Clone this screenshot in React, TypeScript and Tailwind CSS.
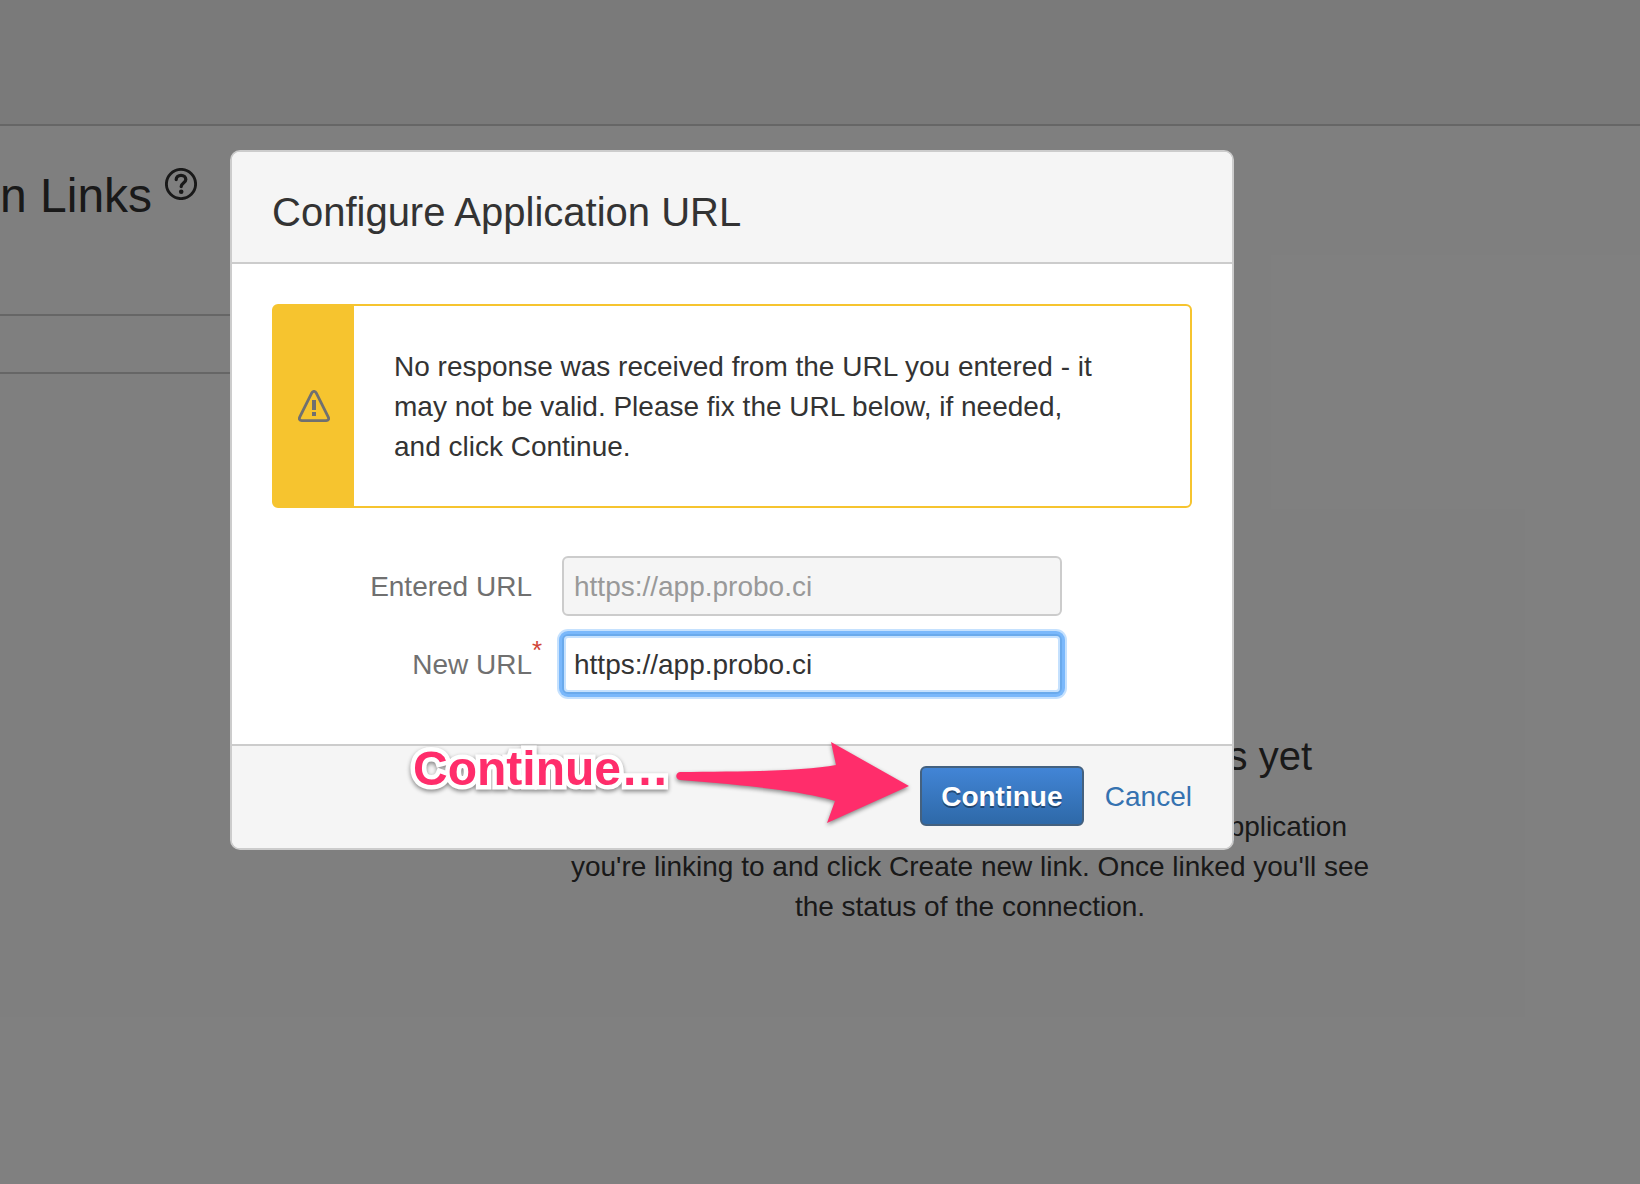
const INPUT =
  "h-[60px] w-full max-w-[500px] rounded-[6px] border-2 px-[10px] pt-[2px] text-[28px] outline-none";

const LABEL = "relative w-[260px] shrink-0 pt-[2px] text-right text-[28px] text-[#707070]";

function HelpIcon() {
  return (
    <svg viewBox="0 0 32 32" className="size-8" fill="none" stroke="currentColor" aria-hidden="true">
      <circle cx="16" cy="16" r="14.6" strokeWidth="2.9" />
      <path
        d="M11.2 11.6c0-2.700 2-4.300 4.800-4.300s4.800 1.700 4.800 4.100c0 3.700-4.600 3.600-4.600 7.200"
        strokeWidth="3.300"
        strokeLinecap="round"
      />
      <circle cx="16.2" cy="23.8" r="2.3" fill="currentColor" stroke="none" />
    </svg>
  );
}

function WarningIcon() {
  return (
    <svg viewBox="0 0 32 32" className="size-8 text-[#707070]" aria-hidden="true">
      <path
        d="M13.8 2.8c1-1.9 3.4-1.9 4.4 0l12.100 24.300c.9 1.8 0 3.500-2 3.500h-24.600c-2 0-2.9-1.700-2-3.500z"
        fill="none"
        stroke="currentColor"
        strokeWidth="2.800"
        strokeLinejoin="round"
      />
      <path d="M14 10h4v10h-4zM14 22h4v4h-4z" fill="currentColor" />
    </svg>
  );
}

function Arrow() {
  return (
    <svg
      viewBox="0 0 236 84"
      className="absolute -top-1 left-[444px] h-[84px] w-[236px] overflow-visible drop-shadow-[0_2px_2px_rgba(0,0,0,0.45)]"
      aria-hidden="true"
    >
      <path
        d="M4 30C60 30 128 29 160 23L155 0L233 44L151 81L159 59C132 50 70 43 4 38C-1 37-1 31 4 30Z"
        fill="#ff2d6b"
      />
    </svg>
  );
}

function Page() {
  return (
    <div className="min-h-screen bg-white">
      <header className="h-[126px] border-b-2 border-[#ccc] bg-[#f5f5f5]" />
      <main>
        <div className="flex h-[188px] items-start pt-[42px]">
          <h1 className="pt-1 text-[48px] leading-[48px]">n Links</h1>
          <a href="#help" aria-label="Help" className="ml-[13px]">
            <HelpIcon />
          </a>
        </div>
        <div className="h-[60px] w-3/5 border-y-2 border-[#ccc]" />
        <section className="ml-[570px] flex w-[800px] flex-col pt-[362px]">
          <h2 className="self-end pr-[58px] text-[40px] leading-[40px]">s yet</h2>
          <p className="pt-[31px] text-center text-[28px] leading-[40px]">
            <span className="block pr-[23px] text-right">pplication</span>
            you're linking to and click Create new link. Once linked you'll see the status of the
            connection.
          </p>
        </section>
      </main>
    </div>
  );
}

function Dialog() {
  return (
    <section
      role="dialog"
      aria-labelledby="dialog-title"
      className="w-full max-w-[1004px] rounded-[10px] border-2 border-[#ccc] bg-white"
    >
      <header className="rounded-t-[8px] border-b-2 border-[#ccc] bg-[#f5f5f5] px-10 pt-10 pb-[30px]">
        <h2 id="dialog-title" className="text-[40px] leading-[40px]">
          Configure Application URL
        </h2>
      </header>

      <div className="px-10 pt-10 pb-[50px]">
        <div role="alert" className="flex rounded-[6px] border-2 border-[#f6c42f] bg-white">
          <div className="flex w-20 shrink-0 items-center justify-center bg-[#f6c42f]">
            <WarningIcon />
          </div>
          <p className="pt-[41px] pr-[90px] pb-[39px] pl-10 text-[28px] leading-[40px]">
            No response was received from the URL you entered - it may not be valid. Please fix the
            URL below, if needed, and click Continue.
          </p>
        </div>

        <form className="flex flex-col gap-[18px] pt-12">
          <div className="flex items-center gap-[30px]">
            <label htmlFor="entered" className={LABEL}>
              Entered URL
            </label>
            <input
              id="entered"
              type="text"
              disabled
              defaultValue="https://app.probo.ci"
              className={INPUT + " border-[#ccc] bg-[#f5f5f5] text-[#999]"}
            />
          </div>
          <div className="flex items-center gap-[30px]">
            <label htmlFor="new" className={LABEL}>
              New URL
              <span className="absolute -top-2 left-full text-[26px] leading-[32px] text-[#d04437]">
                *
              </span>
            </label>
            <input
              id="new"
              type="text"
              required
              defaultValue="https://app.probo.ci"
              className={
                INPUT +
                " border-[#6aaaec] bg-white shadow-[0_0_0_3px_#7ab8fb,0_0_0_5px_#c5e1fe,inset_0_0_0_2px_#c5e1fe]"
              }
            />
          </div>
        </form>
      </div>

      <footer className="relative flex items-center justify-end gap-[21px] rounded-b-[8px] border-t-2 border-[#ccc] bg-[#f5f5f5] px-10 pt-5 pb-[22px]">
        <span className="absolute -top-px left-[181px] text-[48px] leading-[48px] font-bold text-[#ff2d6b] drop-shadow-[0_2px_2px_rgba(0,0,0,0.45)] [-webkit-text-stroke:9px_white] [paint-order:stroke_fill] [stroke-linejoin:round]">
          Continue…
        </span>
        <Arrow />
        <button
          type="button"
          className="h-[60px] w-[164px] rounded-[6px] border-2 border-[#44617f] bg-linear-to-b from-[#4285d6] to-[#2e69a8] pt-[2px] text-[28px] font-bold text-white [text-shadow:0_2px_0_rgba(0,0,0,0.4)]"
        >
          Continue
        </button>
        <a href="#cancel" className="pt-[2px] text-[28px] text-[#3572b0]">
          Cancel
        </a>
      </footer>
    </section>
  );
}

export default function App() {
  return (
    <div className="relative overflow-hidden font-['Liberation_Sans',Arial,sans-serif] text-[#333]">
      <Page />
      <div className="absolute inset-0 flex items-start bg-black/50 pt-[150px] pl-[230px]">
        <Dialog />
      </div>
    </div>
  );
}
